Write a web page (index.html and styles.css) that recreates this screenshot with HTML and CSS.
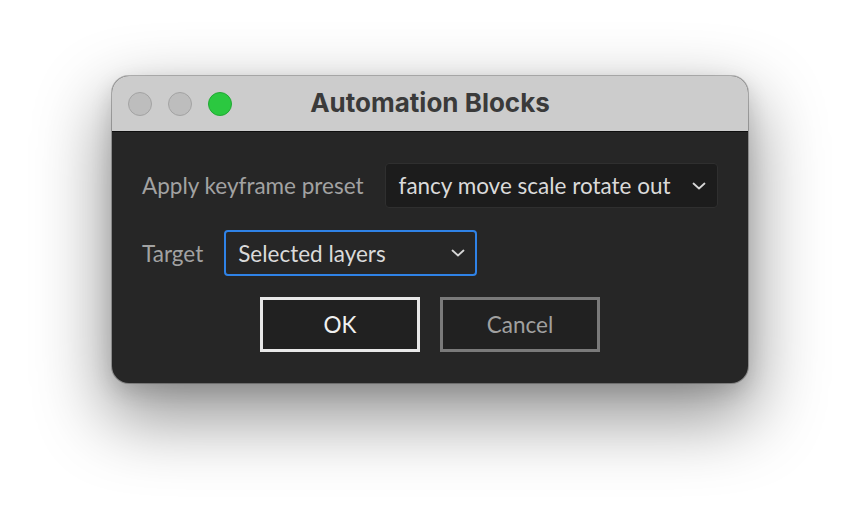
FILE: index.html
```html
<!DOCTYPE html>
<html lang="en">
<head>
<meta charset="utf-8">
<title>Automation Blocks</title>
<link rel="stylesheet" href="styles.css">
</head>
<body>
<div class="stage">
  <div class="window">
    <div class="titlebar">
      <div class="lights">
        <span class="light"></span>
        <span class="light"></span>
        <span class="light light-green"></span>
      </div>
      <div class="title">Automation Blocks</div>
    </div>
    <div class="content">
      <div class="row">
        <span class="label">Apply keyframe preset</span>
        <div class="select select-preset">
          <span class="select-text">fancy move scale rotate out</span>
          <svg class="chev" width="14" height="8" viewBox="0 0 14 8"><path d="M1.5 1.5 L7 6.5 L12.5 1.5" fill="none" stroke="#d6d6d6" stroke-width="1.8" stroke-linecap="round" stroke-linejoin="round"/></svg>
        </div>
      </div>
      <div class="row">
        <span class="label">Target</span>
        <div class="select select-target">
          <span class="select-text">Selected layers</span>
          <svg class="chev" width="14" height="8" viewBox="0 0 14 8"><path d="M1.5 1.5 L7 6.5 L12.5 1.5" fill="none" stroke="#d6d6d6" stroke-width="1.8" stroke-linecap="round" stroke-linejoin="round"/></svg>
        </div>
      </div>
      <div class="buttons">
        <div class="btn btn-ok">OK</div>
        <div class="btn btn-cancel">Cancel</div>
      </div>
    </div>
  </div>
</div>
</body>
</html>
```
FILE: styles.css
```css
* { box-sizing: border-box; }
html, body {
  margin: 0;
  padding: 0;
  background: #ffffff;
  width: 860px;
  height: 532px;
  overflow: hidden;
}
.stage {
  display: flex;
  justify-content: center;
  padding-top: 76px;
}
.window {
  width: 636px;
  height: 307px;
  border-radius: 17px;
  overflow: hidden;
  background: #262626;
  box-shadow: 0 0 0 1px rgba(0,0,0,0.25), 0 30px 70px 6px rgba(0,0,0,0.42), 0 8px 22px rgba(0,0,0,0.14);
  display: flex;
  flex-direction: column;
}
.titlebar {
  height: 56px;
  background: #cccccc;
  border-bottom: 1px solid #0e0e0e;
  display: flex;
  align-items: center;
  position: relative;
  flex: none;
}
.lights {
  display: flex;
  gap: 16px;
  padding-left: 16px;
}
.light {
  width: 24px;
  height: 24px;
  border-radius: 50%;
  background: #bdbdbd;
  border: 1px solid #a3a3a3;
  display: block;
}
.light-green {
  background: #2bc840;
  border-color: #22a834;
}
.title {
  position: absolute;
  left: 0;
  right: 0;
  top: 0;
  bottom: 0;
  display: flex;
  align-items: center;
  justify-content: center;
  font-family: "Inter", "Liberation Sans", sans-serif;
  font-weight: 700;
  font-size: 26px;
  color: #3a3a3a;
  padding-bottom: 2px;
}
.content {
  padding: 31px 30px 30px 30px;
  display: flex;
  flex-direction: column;
  gap: 22px;
  font-family: "Lato", "Liberation Sans", sans-serif;
  font-size: 22.5px;
}
.row {
  display: flex;
  align-items: center;
  gap: 21px;
}
.label {
  color: #a2a2a2;
  white-space: nowrap;
  flex: none;
}
.select {
  display: flex;
  align-items: center;
  justify-content: space-between;
  border-radius: 4px;
  color: #dadada;
  padding: 0 11px 0 13px;
  flex: none;
  white-space: nowrap;
}
.select-preset {
  width: 333px;
  height: 45px;
  background: #1c1c1c;
  border: 1px solid #2f2f2f;
}
.select-target {
  width: 253px;
  height: 46px;
  background: #262626;
  border: 2px solid #2f82e6;
  padding-left: 12px;
  padding-right: 10px;
}
.buttons {
  display: flex;
  justify-content: center;
  gap: 20px;
  margin-top: -1px;
}
.btn {
  width: 160px;
  height: 55px;
  display: flex;
  align-items: center;
  justify-content: center;
  background: #212121;
  border: 3px solid #e8e8e8;
  color: #f0f0f0;
}
.btn-cancel {
  border-color: #7a7a7a;
  color: #a0a0a0;
}
```
